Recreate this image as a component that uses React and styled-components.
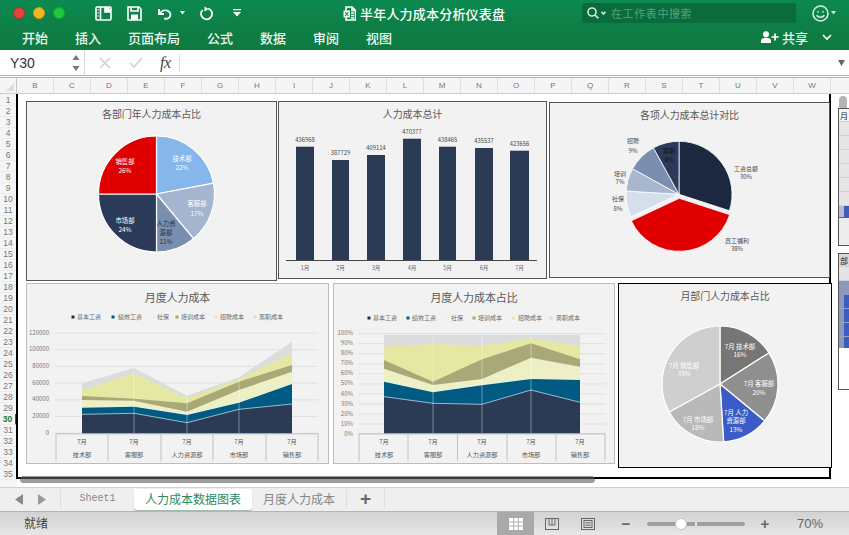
import React from 'react';
import styled, { createGlobalStyle } from 'styled-components';

const FONT = '"Noto Sans CJK SC", "Liberation Sans", sans-serif';

const Global = createGlobalStyle`
  html, body { margin: 0; padding: 0; background: #fff; }
  body { font-family: ${FONT}; overflow: hidden; }
  * { box-sizing: border-box; }
`;

const Window = styled.div`
  width: 849px; height: 535px; display: flex; flex-direction: column; overflow: hidden; background: #fff; position: relative;
`;
const Ribbon = styled.header`
  height: 50px; background: linear-gradient(180deg, #0b8a50 0%, #0d7f46 50%, #0f7a41 100%); color: #fff; display: flex; flex-direction: column; flex: none;
`;
const TopRow = styled.div`
  height: 26px; display: grid; grid-template-columns: 343px 239px 1fr; align-items: center;
`;
const QuickBar = styled.div`display: flex; align-items: center; padding-left: 13px;`;
const Dot = styled.span`
  width: 12px; height: 12px; border-radius: 50%; background: ${p => p.$c}; border: 1px solid ${p => p.$b}; margin-right: 8px; flex: none;
`;
const Tool = styled.svg`
  flex: none; margin-left: ${p => p.$ml || 0}px; fill: none; stroke: #fff; stroke-width: 1.6; display: block;
`;
const DocTitle = styled.div`
  display: flex; align-items: center; gap: 4px; font-size: 13px; font-weight: 500; white-space: nowrap; letter-spacing: .2px;
`;
const SearchRight = styled.div`display: flex; align-items: center;`;
const SearchBox = styled.div`
  width: 214px; height: 20px; background: #0a6b3c; border-radius: 3px; display: flex; align-items: center; padding-left: 5px; gap: 2px;
  color: #4fa67c; font-size: 11px; letter-spacing: .6px;
`;
const MenuRow = styled.nav`
  height: 24px; display: flex; align-items: center; padding: 0 14px 2px 22px; gap: 27px; font-size: 13px; font-weight: 500; color: #eef7f1;
`;
const Share = styled.div`
  margin-left: auto; display: flex; align-items: center; gap: 3px; font-size: 13px; font-weight: 500; margin-right: 3px;
`;
const FormulaBar = styled.div`
  height: 28px; flex: none; display: flex; align-items: center; border-bottom: 3px double #b5b5b5; background: #fff; position: relative;
`;
const NameBox = styled.div`
  width: 85px; height: 100%; padding: 0 4px 0 10px; border-right: 1px solid #d5d5d5; display: flex; align-items: center; justify-content: space-between;
  font: 14px "Liberation Sans", sans-serif; color: #333;
`;
const Stepper = styled.svg`display: block;`;
const FxGroup = styled.div`
  width: 95px; height: 18px; border-right: 1px solid #ddd; display: flex; align-items: center; padding-left: 14px; gap: 14px;
`;
const Fx = styled.span`
  font: italic 16px "Liberation Serif", serif; color: #444; margin-left: 3px; letter-spacing: -.5px;
`;
const FormulaCaret = styled.svg`margin-left: auto; margin-right: 4px;`;
const ColumnHeader = styled.div`
  height: 16px; flex: none; display: flex; background: #f5f5f5; border-bottom: 1px solid #cfcfcf; overflow: hidden;
`;
const Corner = styled.div`
  width: 17px; flex: none; border-right: 1px solid #c8c8c8; position: relative; overflow: hidden;
  &::after { content: ''; position: absolute; right: 2px; bottom: 2px; border-left: 8px solid transparent; border-bottom: 8px solid #ddd; }
`;
const ColCell = styled.div`
  width: 37px; flex: none; text-align: center; font: 8px/15px "Liberation Sans", sans-serif; color: #777; border-right: 1px solid #e0e0e0;
`;
const Main = styled.main`height: 393px; flex: none; display: flex; overflow: hidden;`;
const RowHeader = styled.div`
  width: 17px; flex: none; background: #f5f5f5; padding-top: 1px; overflow: hidden;
`;
const RowCell = styled.div`
  height: 11px; width: 17px; text-align: center; font: ${p => p.$active ? 700 : 400} 8.5px/11px "Liberation Sans", sans-serif;
  color: ${p => p.$active ? '#0f7a41' : '#777'}; border-right: ${p => p.$active ? '2px solid #0f6b3a' : '1px solid #ccc'}; border-bottom: 1px solid #ececec;
`;
const Sheet = styled.div`flex: 1; position: relative; min-width: 0;`;
const Frame = styled.div`
  width: 815px; height: 385px; border-left: 2px solid #000; border-right: 2px solid #000; border-bottom: 2px solid #000; margin-left: -1px;
  padding: 7px 0 0 8px; display: flex; flex-direction: column; gap: 2px;
`;
const ChartRow = styled.div`display: flex; align-items: flex-start; height: ${p => p.$h}px;`;
const Card = styled.section`
  flex: none; width: ${p => p.$w}px; height: ${p => p.$h}px; margin-top: ${p => p.$mt || 0}px; margin-left: ${p => p.$ml || 0}px; background: #f2f2f2;
  border: ${p => p.$border}; display: flex; flex-direction: column;
`;
const CardTitle = styled.h3`
  margin: 0; height: ${p => p.$h}px; line-height: ${p => p.$h}px; flex: none; text-align: center; font-weight: 400; font-size: ${p => p.$size}px; color: #595959; letter-spacing: -.1px;
`;
const Plot = styled.svg`
  display: block; flex: 1; min-height: 0; font-family: ${FONT};
`;
const HScroll = styled.div`
  position: absolute; left: 3px; top: 382px; width: 575px; height: 7px; border-radius: 3.5px; background: rgba(95,95,95,.62);
`;
const VScroll = styled.div`
  position: absolute; left: 822px; top: 2px; width: 8px; height: 150px; border-radius: 4px; background: #b4b4b4;
`;
const SidePanel = styled.div`
  position: absolute; left: ${p => p.$l}px; top: ${p => p.$t}px; width: 14px; height: ${p => p.$h}px; border: 1px solid #555; background: #e8e8ea; display: flex; flex-direction: column; font-size: 8px; color: #222; overflow: hidden;
`;
const SideRow = styled.div`
  height: ${p => p.$h}px; flex: none; background: ${p => p.$bg}; border-bottom: 1px solid ${p => p.$line || '#cfcfd6'}; line-height: ${p => p.$h}px; padding-left: 1px;
  box-shadow: ${p => p.$inset ? `inset 5px 0 0 ${p.$inset}` : 'none'};
`;
const TabBar = styled.div`
  height: 25px; flex: none; background: #efefef; border-top: 1px solid #d2d2d2; border-bottom: 1px solid #b4b4b4; display: flex; align-items: flex-start; font-size: 12px; color: #7d7d7d;
`;
const TabNav = styled.div`
  width: 61px; height: 20px; margin-top: 1px; display: flex; align-items: center; gap: 15px; padding-left: 15px; border-right: 1px solid #ddd;
`;
const Tab = styled.div`
  height: ${p => p.$active ? 21 : 20}px; width: ${p => p.$w}px; flex: none; text-align: center; line-height: 20px;
  background: ${p => p.$active ? '#fff' : 'transparent'}; color: ${p => p.$active ? '#2c8a63' : '#868686'};
  border-radius: 0 0 3px 3px; box-shadow: ${p => p.$active ? '0 1px 1px #9fb9ac' : 'none'};
  font-family: ${p => p.$mono ? '"Liberation Mono", monospace' : FONT}; font-size: ${p => p.$mono ? 10 : 12}px;
  border-right: ${p => p.$div ? '1px solid #ddd' : 'none'}; margin-top: 1px;
`;
const AddTab = styled.div`
  width: 38px; height: 20px; margin-top: 1px; text-align: center; font: 700 19px/19px "Liberation Sans", sans-serif; color: #666; border-right: 1px solid #ddd;
`;
const StatusBar = styled.footer`
  flex: 1; display: flex; align-items: stretch; background: linear-gradient(180deg, #d2d2d2 0%, #e6e6e6 100%); color: #555; font-size: 12px;
`;
const Ready = styled.div`padding-left: 24px; line-height: 22px; width: 497px; color: #444;`;
const ViewBtn = styled.div`
  width: ${p => p.$w}px; display: flex; align-items: center; justify-content: center; background: ${p => p.$active ? '#a9a9a9' : 'transparent'};
`;
const Zoom = styled.div`display: flex; align-items: center; margin-left: 14px;`;
const ZoomSign = styled.span`
  width: 12px; text-align: center; font: 700 15px/15px "Liberation Sans", sans-serif; color: #666;
`;
const Track = styled.div`
  width: 98px; height: 4px; margin: 0 14px 0 15px; border-radius: 2px; background: #9f9f9f; position: relative;
`;
const Tick = styled.span`
  position: absolute; left: 48px; top: 0; width: 2px; height: 4px; background: #e2e2e2;
`;
const Thumb = styled.span`
  position: absolute; left: 28px; top: -4px; width: 12px; height: 12px; border-radius: 50%; background: #fff; border: 1px solid #c4c4c4;
`;
const Percent = styled.div`
  font: 13px/22px "Liberation Sans", sans-serif; color: #666; margin-left: 26px;
`;

const polar = (cx, cy, r, deg) => {
  const a = ((deg - 90) * Math.PI) / 180;
  return [cx + r * Math.cos(a), cy + r * Math.sin(a)];
};
const slicePath = (cx, cy, r, a0, a1) => {
  const [x0, y0] = polar(cx, cy, r, a0);
  const [x1, y1] = polar(cx, cy, r, a1);
  return `M${cx} ${cy}L${x0.toFixed(2)} ${y0.toFixed(2)}A${r} ${r} 0 ${a1 - a0 > 180 ? 1 : 0} 1 ${x1.toFixed(2)} ${y1.toFixed(2)}Z`;
};
function Pie({ cx, cy, r, slices, stroke = '#fff', sw = 1.2 }) {
  let a = 0;
  return (
    <g>
      {slices.map((s, i) => {
        const a0 = a;
        a += s.v * 3.6;
        const mid = ((a0 + a) / 2);
        const [ox, oy] = s.out ? polar(0, 0, s.out, mid) : [0, 0];
        return <path key={i} d={slicePath(cx + ox, cy + oy, r, a0, a)} fill={s.c} stroke={stroke} strokeWidth={sw} />;
      })}
    </g>
  );
}
function Labels({ items, size = 6.4, fill = '#fff', weight = 400 }) {
  return (
    <g fontSize={size} textAnchor="middle" fill={fill} fontWeight={weight}>
      {items.map(([t, x, y, c], i) => (
        <text key={i} x={x} y={y} dominantBaseline="middle" fill={c || fill}>{t}</text>
      ))}
    </g>
  );
}
function Chart({ x, y, w, h, title, size = 10, titleH = 24, mt, ml, border = '1px solid #555', children }) {
  const vx = x + 1, vy = y + 1 + titleH, vw = w - 2, vh = h - 2 - titleH;
  return (
    <Card $w={w} $h={h} $mt={mt} $ml={ml} $border={border}>
      <CardTitle $h={titleH} $size={size}>{title}</CardTitle>
      <Plot viewBox={`${vx} ${vy} ${vw} ${vh}`} width={vw} height={vh}>{children}</Plot>
    </Card>
  );
}

const bars = [
  [296, 314, 146.7, '436968', '1月'], [332, 349, 160, '387729', '2月'], [367, 385, 155, '409114', '3月'],
  [403, 421, 138.7, '470377', '4月'], [439, 456, 146.7, '438465', '5月'], [475, 493, 148, '435537', '6月'], [510, 529, 150.7, '423656', '7月'],
];
function BarPlot() {
  return (
    <g>
      {bars.map(([a, b, t, v, m]) => (
        <g key={m}>
          <rect x={a} y={t} width={b - a} height={260 - t} fill="#2b3a55" />
          <text x={(a + b) / 2} y={t - 6.5} fontSize="5.8" textAnchor="middle" fill="#444" dominantBaseline="middle">{v}</text>
          <text x={(a + b) / 2} y={268.5} fontSize="5.6" textAnchor="middle" fill="#666" dominantBaseline="middle">{m}</text>
        </g>
      ))}
      <line x1="286" x2="537" y1="260.5" y2="260.5" stroke="#444" strokeWidth="1" />
    </g>
  );
}

const NAMES = ['技术部', '客服部', '人力资源部', '市场部', '销售部'];
const LEGEND = ['基本工资', '绩效工资', '社保', '培训成本', '招聘成本', '离职成本'];
const LCOL = ['#1f2d48', '#005a82', '#eef2d8', '#a8a878', '#e6e9a8', '#dcdcdc'];
const zy = v => 280 + v / 3;

function AreaPlot({ xs, layers, gridX, dividers, legend, legendY, yLabels, labelX }) {
  const base = zy(460);
  const poly = tops => [...xs.map((x, i) => `${x},${zy(tops[i]).toFixed(1)}`), `${xs[xs.length - 1]},${base}`, `${xs[0]},${base}`].join(' ');
  return (
    <g>
      {legend.map(([sq, tx], i) => (
        <g key={i}>
          <rect x={sq - 1.5} y={legendY - 1.5} width="3" height="3" fill={LCOL[i]} />
          <text x={tx} y={legendY} fontSize="6" fill="#666" dominantBaseline="middle">{LEGEND[i]}</text>
        </g>
      ))}
      {yLabels.map(([t, y]) => (
        <g key={t}>
          <text x={labelX} y={y} fontSize="6" fill="#777" textAnchor="end" dominantBaseline="middle">{t}</text>
          <line x1={gridX[0]} x2={gridX[1]} y1={y} y2={y} stroke="#d9d9d9" strokeWidth=".7" />
        </g>
      ))}
      {layers.slice().reverse().map((l, i) => (
        <polygon key={i} points={poly(l.t)} fill={l.c} />
      ))}
      <polyline points={xs.map((x, i) => `${x},${zy(layers[0].t[i]).toFixed(1)}`).join(' ')} fill="none" stroke="#bcd5e6" strokeWidth=".8" />
      {xs.slice(1, -1).map(x => (
        <line key={x} x1={x} x2={x} y1={zy(layers[layers.length - 1].t[xs.indexOf(x)])} y2={base} stroke="#fff" strokeOpacity=".55" strokeWidth=".7" />
      ))}
      <line x1={dividers[0]} x2={dividers[5]} y1={base + .5} y2={base + .5} stroke="#b5b5b5" strokeWidth=".8" />
      {dividers.map(d => (
        <line key={d} x1={d} x2={d} y1={base} y2={461} stroke="#b5b5b5" strokeWidth=".8" />
      ))}
      {xs.map((x, i) => (
        <g key={x} fontSize="6.2" textAnchor="middle" fill="#555">
          <text x={x} y={442} dominantBaseline="middle">7月</text>
          <text x={x} y={455} dominantBaseline="middle">{NAMES[i]}</text>
        </g>
      ))}
    </g>
  );
}

const areaA = [
  { c: '#2b3a55', t: [403, 400, 428, 388, 372] },
  { c: '#005a82', t: [383, 380, 405, 368, 312] },
  { c: '#dff3ee', t: [381, 378, 402, 366, 309] },
  { c: '#edf0c4', t: [360, 362, 395, 330, 275] },
  { c: '#a8a878', t: [348, 356, 370, 305, 255] },
  { c: '#e5e8a2', t: [330, 280, 355, 297, 218] },
  { c: '#dcdcdc', t: [310, 264, 347, 292, 185] },
];
const areaB = [
  { c: '#2b3a55', t: [350, 370, 373, 330, 367] },
  { c: '#005a82', t: [305, 337, 316, 297, 300] },
  { c: '#dff3ee', t: [303, 334, 313, 295, 298] },
  { c: '#edf0c4', t: [266, 315, 297, 233, 260] },
  { c: '#a8a878', t: [240, 305, 238, 190, 238] },
  { c: '#e5e8a2', t: [200, 192, 197, 175, 198] },
  { c: '#dcdcdc', t: [165, 165, 165, 165, 165] },
];
const yA = [['120000', 333], ['100000', 349.7], ['80000', 366.4], ['60000', 383.1], ['40000', 399.8], ['20000', 416.5], ['0', 433.2]];
const yB = ['100%', '90%', '80%', '70%', '60%', '50%', '40%', '30%', '20%', '10%', '0%'].map((t, i) => [t, 333.7 + i * 10.03]);

const COLS = 'BCDEFGHIJKLMNOPQRSTUVW'.split('');
const ROWS = Array.from({ length: 35 }, (_, i) => i + 1);

function Caret({ ml, size = 6, color = '#fff' }) {
  return <Tool $ml={ml} width={size} height={size * .7} viewBox="0 0 6 4" style={{ stroke: 'none' }}><path d="M0 0h6L3 4z" fill={color} /></Tool>;
}

export default function App() {
  return (
    <Window>
      <Global />
      <Ribbon>
        <TopRow>
          <QuickBar>
            <Dot $c="#e8403a" $b="#b3322c" />
            <Dot $c="#f2b622" $b="#cf9a1c" />
            <Dot $c="#1fc73a" $b="#17a82f" />
            <Tool $ml={22} width="17" height="15" viewBox="0 0 17 15">
              <rect x="1" y="1" width="15" height="13" rx="1" />
              <path d="M5.5 1v13M10 1v5h6" />
              <path d="M2.4 4h1.8M2.4 7h1.8M2.4 10h1.8" strokeWidth="1.2" />
              <path d="M10 1h3l3 3v2h-6z" fill="#fff" stroke="none" />
            </Tool>
            <Tool $ml={15} width="15" height="15" viewBox="0 0 15 15">
              <path d="M1 1h11l2 2v11H1z" />
              <path d="M4 1v4h7V1" />
              <rect x="4" y="8.5" width="7" height="5.5" fill="#fff" stroke="none" />
            </Tool>
            <Tool $ml={15} width="16" height="13" viewBox="0 0 16 13" strokeWidth="2">
              <path d="M2 2v5h5" strokeWidth="1.8" />
              <path d="M2.5 7C4.5 3.6 8 2.6 10.8 3.8c3.2 1.4 3.6 5.4.8 7.2-1.4.9-3 .9-4.4.3" strokeWidth="1.8" />
            </Tool>
            <Caret ml={7} size={5} />
            <Tool $ml={14} width="14" height="15" viewBox="0 0 14 15">
              <path d="M9 2.5A5.5 5.5 0 1 1 3.6 4" strokeWidth="1.8" />
              <path d="M5.5 0.5v5L9.5 3z" fill="#fff" stroke="none" />
            </Tool>
            <Tool $ml={19} width="10" height="8" viewBox="0 0 10 8" style={{ stroke: 'none' }}>
              <path d="M1 0h8v1.3H1z M1 3h8L5 7.5z" fill="#fff" />
            </Tool>
          </QuickBar>
          <DocTitle>
            <Tool width="13" height="15" viewBox="0 0 13 15" strokeWidth="1">
              <path d="M3 1h6l3.5 3.5V14H3z" />
              <path d="M9 1v3.5h3.5M8 7h3M8 9.5h3M8 12h3" />
              <rect x="0.5" y="4.5" width="6.5" height="7" fill="#fff" stroke="none" />
              <path d="M2 6l3.5 4M5.5 6L2 10" stroke="#0d7f46" strokeWidth="1.1" />
            </Tool>
            半年人力成本分析仪表盘
          </DocTitle>
          <SearchRight>
            <SearchBox>
              <Tool width="12" height="12" viewBox="0 0 12 12" strokeWidth="1" style={{ stroke: '#d5ebdf' }}>
                <circle cx="5" cy="5" r="4" /><path d="M8 8l3.4 3.4" />
              </Tool>
              <Tool width="5" height="4" viewBox="0 0 5 4" strokeWidth=".9" style={{ stroke: '#d5ebdf', marginRight: 3 }}><path d="M.5 .8L2.5 3L4.5 .8" /></Tool>
              在工作表中搜索
            </SearchBox>
            <Tool $ml={16} width="17" height="17" viewBox="0 0 17 17" strokeWidth="1" style={{ stroke: '#d5ebdf' }}>
              <circle cx="8.5" cy="8.5" r="7.5" />
              <circle cx="6" cy="6.8" r=".9" fill="#d5ebdf" stroke="none" /><circle cx="11" cy="6.8" r=".9" fill="#d5ebdf" stroke="none" />
              <path d="M4.6 10.2c1.8 2.8 6 2.8 7.8 0" />
            </Tool>
            <Caret ml={2} size={5} color="#d5ebdf" />
          </SearchRight>
        </TopRow>
        <MenuRow>
          <span>开始</span><span>插入</span><span>页面布局</span><span>公式</span><span>数据</span><span>审阅</span><span>视图</span>
          <Share>
            <Tool width="18" height="12" viewBox="0 0 18 12" style={{ stroke: 'none' }}>
              <circle cx="5" cy="3.2" r="3" fill="#fff" />
              <path d="M0 12V9.6C0 8 2 6.8 5 6.8s5 1.2 5 2.8V12z" fill="#fff" />
              <path d="M13.2 2.4h1.7v2.8h2.8v1.6h-2.8v2.8h-1.7V6.8h-2.8V5.2h2.8z" fill="#fff" />
            </Tool>
            共享
            <Tool $ml={11} width="10" height="7" viewBox="0 0 10 7" strokeWidth="1.8"><path d="M1 1l4 4 4-4" /></Tool>
          </Share>
        </MenuRow>
      </Ribbon>

      <FormulaBar>
        <NameBox>
          Y30
          <Stepper width="8" height="18" viewBox="0 0 8 18"><path d="M4 1l3.6 5H.4z M.4 12h7.2L4 17z" fill="#777" /></Stepper>
        </NameBox>
        <FxGroup>
          <Tool width="12" height="12" viewBox="0 0 12 12" strokeWidth="1.8" style={{ stroke: '#d0d0d0' }}><path d="M1 1l10 10M11 1L1 11" /></Tool>
          <Tool $ml={4} width="14" height="11" viewBox="0 0 14 11" strokeWidth="1.8" style={{ stroke: '#d0d0d0' }}><path d="M1 6l4 4 8-9" /></Tool>
          <Fx>fx</Fx>
        </FxGroup>
        <FormulaCaret width="7" height="6" viewBox="0 0 7 6"><path d="M0 0h7L3.5 6z" fill="#666" /></FormulaCaret>
      </FormulaBar>

      <ColumnHeader>
        <Corner />
        {COLS.map(c => <ColCell key={c}>{c}</ColCell>)}
      </ColumnHeader>

      <Main>
        <RowHeader>
          {ROWS.map(r => <RowCell key={r} $active={r === 30}>{r}</RowCell>)}
        </RowHeader>
        <Sheet>
          <VScroll />
          <SidePanel $l={821} $t={14} $h={138}>
            <SideRow $h={13} $bg="#f4f4f4">月</SideRow>
            {[0, 1, 2, 3, 4, 5].map(i => <SideRow key={i} $h={14} $bg="#e6e6e8" />)}
            <SideRow $h={12} $bg="#3f5cc0" $line="#3f5cc0" $inset="#b9bcc9" />
            <SideRow $h={29} $bg="#ececec" />
          </SidePanel>
          <SidePanel $l={821} $t={159} $h={137}>
            <SideRow $h={13} $bg="#d8d8dc">部</SideRow>
            <SideRow $h={14} $bg="#e4e4e8" />
            <SideRow $h={14} $bg="#8f97ba" $line="#8f97ba" />
            <SideRow $h={14} $bg="#3f5cc0" $line="#9aa2c2" $inset="#8f97ba" />
            <SideRow $h={14} $bg="#3f5cc0" $line="#9aa2c2" $inset="#8f97ba" />
            <SideRow $h={14} $bg="#3f5cc0" $line="#9aa2c2" $inset="#8f97ba" />
            <SideRow $h={12} $bg="#3f5cc0" $line="#fff" $inset="#8f97ba" />
            <SideRow $h={40} $bg="#fff" $line="#fff" />
          </SidePanel>
          <Frame>
            <ChartRow $h={180}>
              <Chart x={26} y={101} w={251} h={180} title="各部门年人力成本占比">
                <Pie cx={156.5} cy={194} r={58} slices={[
                  { v: 22, c: '#85b7ea' }, { v: 17, c: '#a5b5d0' }, { v: 11, c: '#7a8fb0' }, { v: 25, c: '#2a3a58' }, { v: 25, c: '#e00000' },
                ]} />
                <Labels items={[
                  ['技术部', 182, 159], ['22%', 182, 168], ['客服部', 197, 204], ['17%', 197, 214],
                  ['人力资', 166, 224, '#1f2d48'], ['源部', 166, 233, '#1f2d48'], ['11%', 166, 242, '#1f2d48'],
                  ['市场部', 125, 221], ['24%', 125, 230], ['销售部', 125, 162], ['26%', 125, 171],
                ]} />
              </Chart>
              <Chart x={278} y={101} ml={1} w={269} h={178} title="人力成本总计">
                <BarPlot />
              </Chart>
              <Chart x={549} y={102} ml={2} w={281} h={176} mt={1} title="各项人力成本总计对比">
                <Pie cx={679} cy={194.3} r={53} sw={.8} slices={[
                  { v: 30, c: '#1c2840' }, { v: 38, c: '#e00000', out: 4 }, { v: 8, c: '#d5dfec' }, { v: 7, c: '#a8b6d0' }, { v: 9, c: '#7a8fb0' }, { v: 8, c: '#2a3a58' },
                ]} />
                <Labels size={6} fill="#444" items={[
                  ['工资总额', 746, 169], ['30%', 746, 177.5], ['员工福利', 737, 241], ['38%', 737, 249.5],
                  ['社保', 618, 199], ['8%', 618, 209], ['培训', 620, 174], ['7%', 620, 182.5],
                  ['招聘', 633, 141], ['9%', 633, 151], ['离职', 669, 151.5, '#111'], ['8%', 669, 160, '#111'],
                ]} />
              </Chart>
            </ChartRow>
            <ChartRow $h={186}>
              <Chart x={26} y={283} w={303} h={181} size={11} titleH={26} border="1px solid #bdbdbd" title="月度人力成本">
                <AreaPlot
                  xs={[82, 134, 187, 239, 292]} layers={areaA} gridX={[55, 318]}
                  dividers={[56, 108, 161, 213, 266, 318]} legendY={317} labelX={49} yLabels={yA}
                  legend={[[73, 77], [113, 118], [154, 157], [177, 181], [216, 220], [255, 259]]}
                />
              </Chart>
              <Chart x={333} y={283} ml={4} w={282} h={181} size={11} titleH={26} border="1px solid #bdbdbd" title="月度人力成本占比">
                <AreaPlot
                  xs={[384, 433, 482, 531, 580]} layers={areaB} gridX={[359, 606]}
                  dividers={[359, 408, 457.5, 507, 556, 605]} legendY={318} labelX={353} yLabels={yB}
                  legend={[[369, 373], [408, 412], [446, 451], [474, 478], [513, 518], [551, 556]]}
                />
              </Chart>
              <Chart x={618} y={283} ml={3} w={214} h={185} border="1.5px solid #000" title="月部门人力成本占比">
                <Pie cx={720} cy={384} r={58} slices={[
                  { v: 16, c: '#767676' }, { v: 20, c: '#8f8f8f' }, { v: 13, c: '#3a5bc8' }, { v: 18, c: '#b9b9b9' }, { v: 33, c: '#cfcfcf' },
                ]} />
                <Labels items={[
                  ['7月 技术部', 740, 347], ['16%', 740, 355.5], ['7月 客服部', 759, 384], ['20%', 759, 393],
                  ['7月 人力', 736, 413], ['资源部', 736, 421.5], ['13%', 736, 430],
                  ['7月 市场部', 698, 420], ['18%', 698, 428.5], ['7月 销售部', 684, 366], ['33%', 684, 374.5],
                ]} />
              </Chart>
            </ChartRow>
          </Frame>
          <HScroll />
        </Sheet>
      </Main>

      <TabBar>
        <TabNav>
          <svg width="8" height="11" viewBox="0 0 8 11"><path d="M8 0v11L0 5.5z" fill="#888" /></svg>
          <svg width="8" height="11" viewBox="0 0 8 11"><path d="M0 0v11l8-5.5z" fill="#999" /></svg>
        </TabNav>
        <Tab $w={73} $mono>Sheet1</Tab>
        <Tab $w={118} $active>人力成本数据图表</Tab>
        <Tab $w={95} $div>月度人力成本</Tab>
        <AddTab>+</AddTab>
      </TabBar>

      <StatusBar>
        <Ready>就绪</Ready>
        <ViewBtn $w={37} $active>
          <svg width="14" height="12" viewBox="0 0 14 12"><rect width="14" height="12" fill="#fff" /><path d="M4.7 0v12M9.3 0v12M0 4h14M0 8h14" stroke="#a9a9a9" strokeWidth=".9" /></svg>
        </ViewBtn>
        <ViewBtn $w={35}>
          <svg width="14" height="12" viewBox="0 0 14 12" fill="none" stroke="#666"><rect x=".5" y=".5" width="13" height="11" /><path d="M4 .5V7h6V.5M7 .5V7" /></svg>
        </ViewBtn>
        <ViewBtn $w={37}>
          <svg width="14" height="12" viewBox="0 0 14 12" fill="none" stroke="#666"><rect x=".5" y=".5" width="13" height="11" /><rect x="3" y="2.5" width="8" height="7" /><path d="M4.5 4.5h5M4.5 6h5M4.5 7.5h5" strokeWidth=".7" /></svg>
        </ViewBtn>
        <Zoom>
          <ZoomSign>−</ZoomSign>
          <Track><Tick /><Thumb /></Track>
          <ZoomSign>+</ZoomSign>
          <Percent>70%</Percent>
        </Zoom>
      </StatusBar>
    </Window>
  );
}
